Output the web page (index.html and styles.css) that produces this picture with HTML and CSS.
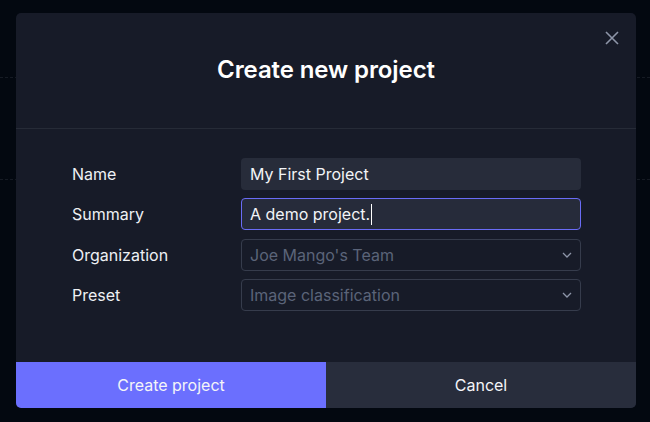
FILE: index.html
```html
<!DOCTYPE html>
<html lang="en">
<head>
<meta charset="utf-8">
<title>Create new project</title>
<link rel="stylesheet" href="styles.css">
</head>
<body>
<div class="backdrop">
  <div class="bg-line bg-line-1"></div>
  <div class="bg-line bg-line-2"></div>
  <div class="modal">
    <div class="modal-header">
      <h1 class="modal-title">Create new project</h1>
      <button class="close-btn" aria-label="Close">
        <svg width="14" height="14" viewBox="0 0 14 14"><path d="M1 1 L13 13 M13 1 L1 13" stroke="#8d95a8" stroke-width="1.6" fill="none"/></svg>
      </button>
    </div>
    <div class="modal-body">
      <div class="form-grid">
        <label class="form-label">Name</label>
        <div class="field field-filled">My First Project</div>
        <label class="form-label">Summary</label>
        <div class="field field-focused">A demo project.<span class="caret"></span></div>
        <label class="form-label">Organization</label>
        <div class="field field-select"><span class="placeholder">Joe Mango's Team</span>
          <svg class="chevron" width="10" height="6" viewBox="0 0 10 6"><path d="M1 1 L5 5 L9 1" stroke="#8d95a8" stroke-width="1.3" fill="none"/></svg>
        </div>
        <label class="form-label">Preset</label>
        <div class="field field-select"><span class="placeholder">Image classification</span>
          <svg class="chevron" width="10" height="6" viewBox="0 0 10 6"><path d="M1 1 L5 5 L9 1" stroke="#8d95a8" stroke-width="1.3" fill="none"/></svg>
        </div>
      </div>
    </div>
    <div class="modal-footer">
      <button class="btn btn-primary">Create project</button>
      <button class="btn btn-secondary">Cancel</button>
    </div>
  </div>
</div>
</body>
</html>
```

FILE: styles.css
```css
* { box-sizing: border-box; }
html, body {
  margin: 0;
  padding: 0;
  width: 650px;
  height: 422px;
  background: #030810;
  font-family: Inter, "Noto Sans", sans-serif;
  color: #eef0f4;
  overflow: hidden;
}
.backdrop {
  position: relative;
  width: 650px;
  height: 422px;
  padding: 13px 14px 0 16px;
}
.bg-line {
  position: absolute;
  left: 0;
  right: 0;
  height: 0;
  border-top: 1px dashed #161b24;
}
.bg-line-1 { top: 77px; }
.bg-line-2 { top: 179px; }
.modal {
  position: relative;
  width: 620px;
  height: 395px;
  background: #171b28;
  border-radius: 5px;
  overflow: hidden;
  display: flex;
  flex-direction: column;
}
.modal-header {
  position: relative;
  height: 116px;
  border-bottom: 1px solid #262b37;
  display: flex;
  align-items: center;
  justify-content: center;
}
.modal-title {
  margin: 0;
  font-size: 24px;
  font-weight: 600;
  color: #ffffff;
  letter-spacing: -0.1px;
  padding-bottom: 3px;
}
.close-btn {
  position: absolute;
  top: 18px;
  right: 17px;
  width: 14px;
  height: 14px;
  padding: 0;
  border: 0;
  background: none;
  display: flex;
}
.modal-body {
  flex: 1;
  padding: 29px 55px 0 56px;
}
.form-grid {
  display: grid;
  grid-template-columns: 169px 340px;
  row-gap: 8.3px;
  align-items: center;
}
.form-label {
  font-size: 16px;
  color: #eef0f4;
}
.field {
  height: 32px;
  border-radius: 4px;
  font-size: 16px;
  display: flex;
  align-items: center;
  padding: 0 9px;
  color: #f2f4f7;
}
.field-filled {
  background: #272c3a;
}
.field-focused {
  background: #262b3a;
  border: 1px solid #6a6cf6;
  padding-left: 8px;
}
.caret {
  display: inline-block;
  width: 1px;
  height: 21px;
  background: #ffffff;
  margin-left: 1px;
}
.field-select {
  border: 1px solid #363c4c;
  padding: 0 8px 0 8px;
  justify-content: space-between;
}
.placeholder {
  color: #5b6479;
}
.chevron {
  margin-right: 0;
}
.modal-footer {
  display: flex;
  height: 46px;
}
.btn {
  flex: 1;
  border: 0;
  font-family: Inter, "Noto Sans", sans-serif;
  font-size: 16px;
  color: #f4f5f8;
  padding: 0 0 1px 0;
}
.btn-primary {
  background: #6b6ffe;
}
.btn-secondary {
  background: #282d3c;
}
```
